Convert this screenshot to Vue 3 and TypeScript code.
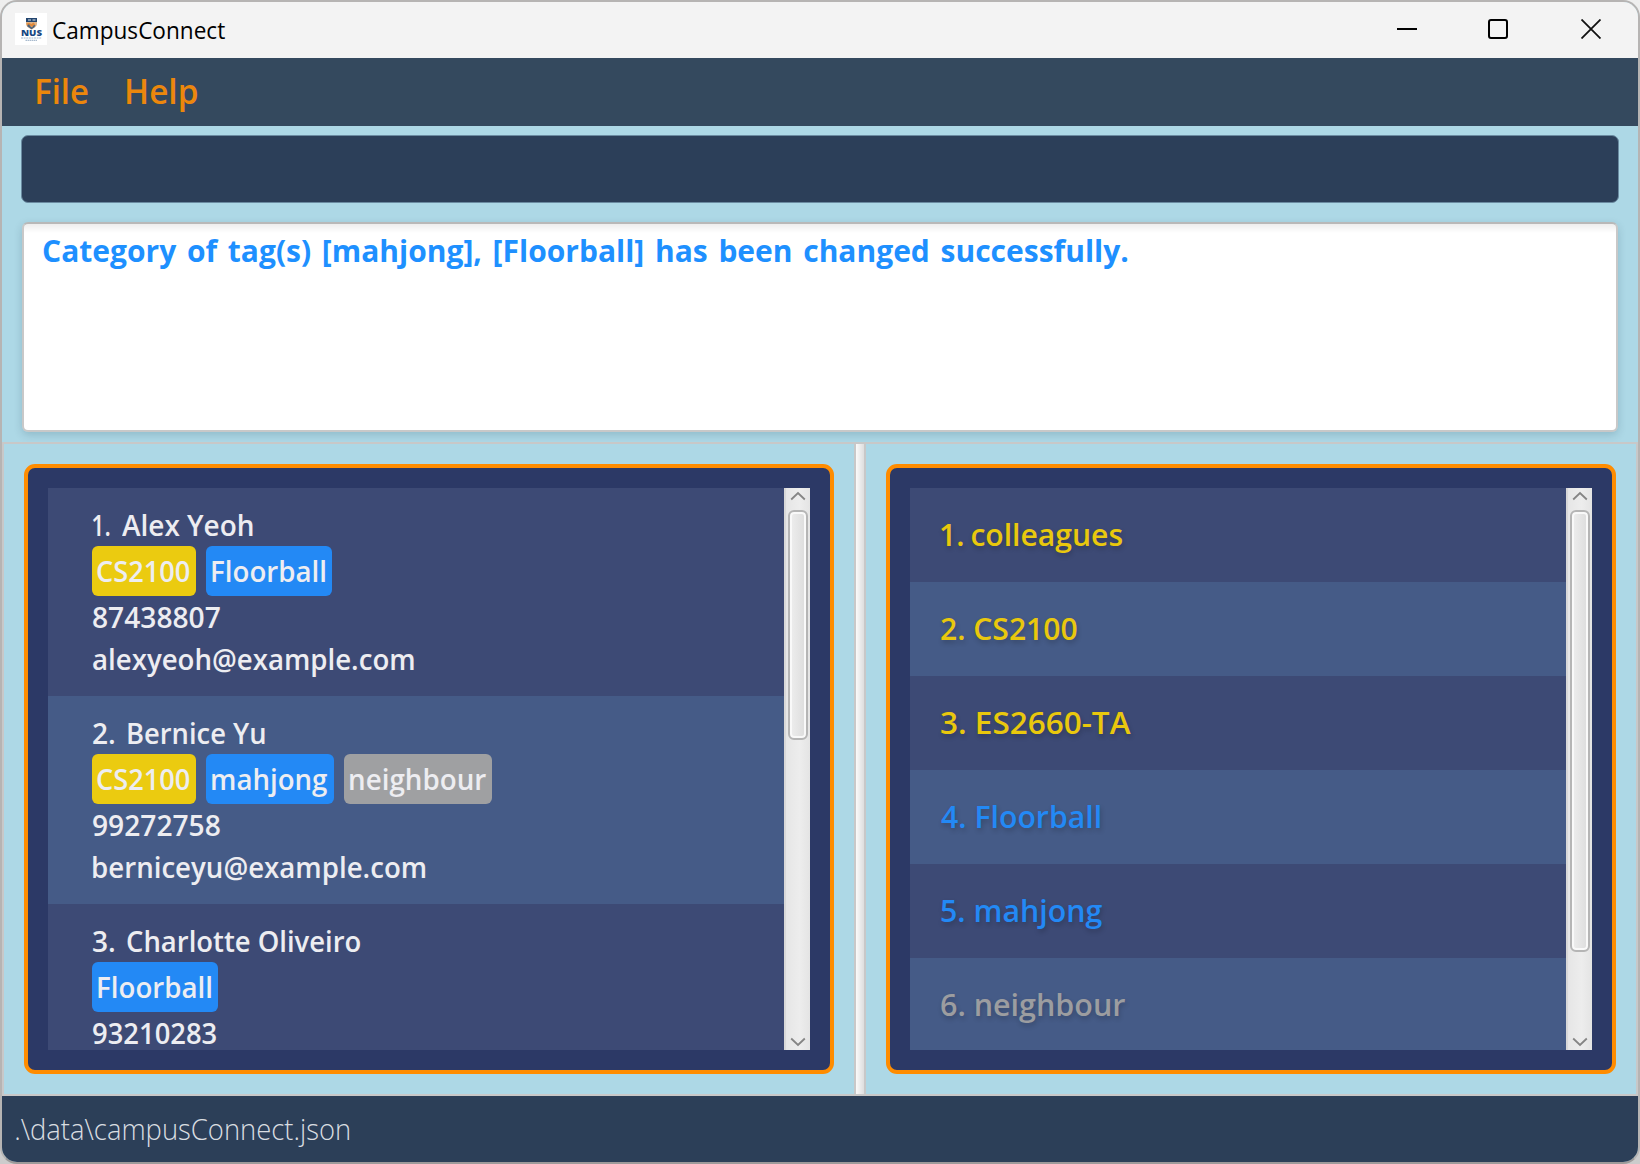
<script setup lang="ts">
type Category = 'academic' | 'activity' | 'general'

interface Fitted {
  text: string
  ink: number
}

interface Tag extends Fitted {
  category: Category
  width: number
  inset: number
}

interface Person {
  index: Fitted
  indexWidth: number
  name: Fitted
  tags: Tag[]
  phone: Fitted
  email?: Fitted
}

const cs2100: Tag = { text: 'CS2100', category: 'academic', width: 104, inset: 4.5, ink: 93 }
const floorball: Tag = { text: 'Floorball', category: 'activity', width: 126, inset: 6, ink: 113 }
const mahjong: Tag = { text: 'mahjong', category: 'activity', width: 128, inset: 6, ink: 115.5 }
const neighbour: Tag = { text: 'neighbour', category: 'general', width: 148, inset: 5.5, ink: 136 }

const people: Person[] = [
  {
    index: { text: '1.', ink: 16.5 },
    indexWidth: 29,
    name: { text: 'Alex Yeoh', ink: 130.5 },
    tags: [cs2100, floorball],
    phone: { text: '87438807', ink: 127.5 },
    email: { text: 'alexyeoh@example.com', ink: 320.5 },
  },
  {
    index: { text: '2.', ink: 21 },
    indexWidth: 35,
    name: { text: 'Bernice Yu', ink: 136.5 },
    tags: [cs2100, mahjong, neighbour],
    phone: { text: '99272758', ink: 127.5 },
    email: { text: 'berniceyu@example.com', ink: 332 },
  },
  {
    index: { text: '3.', ink: 21 },
    indexWidth: 34,
    name: { text: 'Charlotte Oliveiro', ink: 233 },
    tags: [floorball],
    phone: { text: '93210283', ink: 123 },
  },
]

const tagList: (Fitted & { category: Category; gap: number })[] = [
  { text: '1. colleagues', category: 'academic', ink: 181, gap: -2 },
  { text: '2. CS2100', category: 'academic', ink: 136, gap: 0 },
  { text: '3. ES2660-TA', category: 'academic', ink: 190, gap: 0 },
  { text: '4. Floorball', category: 'activity', ink: 159.5, gap: 0 },
  { text: '5. mahjong', category: 'activity', ink: 161, gap: 0 },
  { text: '6. neighbour', category: 'general', ink: 184, gap: 0 },
]

/* Scales a label so that its glyphs start at the box edge and span the given width. */
const vFit = {
  mounted(el: HTMLElement, binding: { value: number }) {
    const ctx = document.createElement('canvas').getContext('2d')
    if (!ctx) return
    const cs = getComputedStyle(el)
    ctx.font = `${cs.fontWeight} ${cs.fontSize} ${cs.fontFamily}`
    ctx.wordSpacing = cs.wordSpacing
    const m = ctx.measureText(el.textContent ?? '')
    const scale = binding.value / (m.actualBoundingBoxLeft + m.actualBoundingBoxRight)
    el.style.transform = `translateX(${m.actualBoundingBoxLeft * scale}px) scaleX(${scale})`
  },
}
</script>

<template>
  <div class="desktop">
    <div class="window">
      <header class="titlebar">
        <svg class="logo" width="32" height="32" viewBox="0 0 32 32">
          <rect width="32" height="32" fill="#fff" />
          <path d="M11 5h11v5.500c0 3-2.500 4.500-5.500 6-3-1.500-5.500-3-5.500-6z" fill="#dfb58a" />
          <path d="M11 5h11v4H11z" fill="#23456f" />
          <path d="M13 6.200h3v1.500h-3zM17.500 6.200h3v1.500h-3z" fill="#9fb0c2" />
          <path d="M11.300 10.500l3-.8 2 1.300 2.300-1.600 1.600 2-1.900 2.500-3.300-.8-2.200.5z" fill="#e08a3c" />
          <path d="M12 13l2-2 1 2 2 1.500 2-2.500 1.500.5-1.500 2-2.500 1.800z" fill="#47617e" />
          <text x="6" y="23" font-size="8.200" font-weight="800" textLength="21" lengthAdjust="spacingAndGlyphs" fill="#174781">NUS</text>
          <path d="M6 25h20.500" stroke="#a6b9ce" stroke-width="1.200" stroke-dasharray="2 .6" />
          <path d="M10.500 27.300h12" stroke="#a9bbce" stroke-width="1.200" stroke-dasharray="1.500 .5" />
        </svg>
        <span v-fit="172" class="fit title">CampusConnect</span>
        <div class="controls">
          <svg width="20" height="20" viewBox="0 0 20 20"><path d="M0 10h20" stroke="#000" stroke-width="2" /></svg>
          <svg width="20" height="20" viewBox="0 0 20 20"><rect x="1" y="1" width="18" height="18" rx="2" fill="none" stroke="#000" stroke-width="2" /></svg>
          <svg width="20" height="20" viewBox="0 0 20 20"><path d="M.5.5l19 19M19.500.5l-19 19" fill="none" stroke="#111" stroke-width="1.800" /></svg>
        </div>
      </header>

      <nav class="menubar">
        <div class="menu"><span v-fit="51" class="fit">File</span></div>
        <div class="menu"><span v-fit="70" class="fit">Help</span></div>
      </nav>

      <div class="command" />

      <div class="result">
        <span v-fit="1085" class="fit">Category of tag(s) [mahjong], [Floorball] has been changed successfully.</span>
      </div>

      <main class="split">
        <section class="pane left">
          <div class="panel">
            <div class="viewport">
              <ul class="list">
                <li v-for="p in people" :key="p.name.text" class="person">
                  <div class="line">
                    <span :style="{ width: p.indexWidth + 'px' }"><span v-fit="p.index.ink" class="fit">{{ p.index.text }}</span></span>
                    <span v-fit="p.name.ink" class="fit">{{ p.name.text }}</span>
                  </div>
                  <div class="tags">
                    <span
                      v-for="t in p.tags"
                      :key="t.text"
                      class="tag"
                      :class="t.category"
                      :style="{ width: t.width + 'px', paddingLeft: t.inset + 'px' }"
                    ><span v-fit="t.ink" class="fit">{{ t.text }}</span></span>
                  </div>
                  <div class="line"><span v-fit="p.phone.ink" class="fit">{{ p.phone.text }}</span></div>
                  <div v-if="p.email" class="line"><span v-fit="p.email.ink" class="fit">{{ p.email.text }}</span></div>
                </li>
              </ul>
              <div class="scrollbar">
                <svg width="16" height="22" viewBox="0 0 16 22"><path d="M1.200 11.500L8 5l6.800 6.500" /></svg>
                <div class="track"><div class="thumb people-thumb" /></div>
                <svg width="16" height="22" viewBox="0 0 16 22"><path d="M1.200 10.500L8 17l6.800-6.500" /></svg>
              </div>
            </div>
          </div>
        </section>
        <div class="divider" />
        <section class="pane right">
          <div class="panel">
            <div class="viewport">
              <ul class="list">
                <li v-for="t in tagList" :key="t.text" class="entry" :class="t.category" :style="{ wordSpacing: t.gap + 'px' }">
                  <span v-fit="t.ink" class="fit">{{ t.text }}</span>
                </li>
              </ul>
              <div class="scrollbar">
                <svg width="16" height="22" viewBox="0 0 16 22"><path d="M1.200 11.500L8 5l6.800 6.500" /></svg>
                <div class="track"><div class="thumb tags-thumb" /></div>
                <svg width="16" height="22" viewBox="0 0 16 22"><path d="M1.200 10.500L8 17l6.800-6.500" /></svg>
              </div>
            </div>
          </div>
        </section>
      </main>

      <footer class="status"><span v-fit="333" class="fit">.\data\campusConnect.json</span></footer>
    </div>
  </div>
</template>

<style>
body {
  margin: 0;
}
</style>

<style scoped>
* {
  box-sizing: border-box;
}
.desktop {
  width: 1640px;
  height: 1164px;
  background: linear-gradient(#eee, #ccc);
  font-family: "Open Sans", "Noto Sans", sans-serif;
  overflow: hidden;
}
.window {
  width: 1640px;
  height: 1164px;
  display: flex;
  flex-direction: column;
  border: 2px solid #b6b4b3;
  border-bottom-color: #9d9a9a;
  border-radius: 17px;
  overflow: hidden;
  background: #add8e6;
}
.fit {
  display: inline-block;
  white-space: nowrap;
  transform-origin: left center;
}
.titlebar {
  flex: none;
  height: 56px;
  display: flex;
  align-items: center;
  padding-left: 13px;
  padding-right: 37px;
  background: #f3f3f3;
}
.logo {
  flex: none;
  margin-top: -2px;
}
.title {
  margin-left: 6px;
  font-size: 23px;
  color: #000;
}
.controls {
  display: flex;
  gap: 72px;
  margin-left: auto;
  margin-top: -2px;
}
.controls svg:first-child {
  margin-right: -1px;
}
.controls svg:last-child {
  margin-left: 1px;
}
.menubar {
  flex: none;
  height: 68px;
  display: flex;
  padding-left: 34.5px;
  background: #34495e;
  color: #ec870c;
  font-size: 34.5px;
  font-weight: 600;
  line-height: 66px;
}
.menu:first-child {
  width: 90px;
}
.command {
  flex: none;
  height: 68px;
  margin: 9px 19px 0;
  border: 1px solid #6b8ba1;
  border-radius: 7px;
  background: #2c3f59;
}
.result {
  flex: none;
  height: 210px;
  margin: 19px 20px 0;
  padding-left: 18.5px;
  border: 2px solid #c8c8c8;
  border-top-color: #b8b8b8;
  border-radius: 6px;
  background: linear-gradient(#ededed, #fff 9px);
  box-shadow: 0 3px 8px rgba(0, 40, 60, 0.17);
  color: #1e90ff;
  font-size: 31px;
  font-weight: 700;
  line-height: 53px;
  word-spacing: 3px;
}
.split {
  flex: none;
  height: 654px;
  margin-top: 10px;
  display: flex;
  border: 2px solid #c8c8c8;
}
.pane {
  padding: 20px;
  display: flex;
  background: #add8e6;
}
.left {
  width: 850px;
}
.right {
  flex: 1;
}
.divider {
  width: 12px;
  border: solid #c8c8c8;
  border-width: 0 2px;
  background: linear-gradient(90deg, #fafafa, #dedede);
}
.panel {
  flex: 1;
  padding: 20px;
  border: 4px solid #ff8c00;
  border-radius: 11px;
  background: #2c3966;
}
.viewport {
  height: 562px;
  display: flex;
  overflow: hidden;
}
.list {
  flex: 1;
  margin: 0;
  padding: 0;
  list-style: none;
}
.list > li:nth-child(odd) {
  background: #3d4a75;
}
.list > li:nth-child(even) {
  background: #455b87;
}
.person {
  height: 208px;
  padding: 16px 44px;
  color: #ededf1;
  font-size: 28.500px;
  font-weight: 600;
}
.line {
  display: flex;
  align-items: center;
  height: 42px;
  line-height: 34px;
  padding-left: 0.5px;
}
.tags {
  display: flex;
  gap: 10px;
  height: 50px;
}
.tag {
  height: 50px;
  line-height: 50px;
  border-radius: 6px;
}
.tag.academic {
  background: #ebcb10;
}
.tag.activity {
  background: #2389f5;
}
.tag.general {
  background: #9fa0a2;
}
.entry {
  height: 94px;
  padding-left: 31px;
  font-size: 31px;
  font-weight: 600;
  line-height: 93px;
  text-shadow: 1px 3px 5px rgba(0, 0, 0, 0.2);
}
.entry.academic {
  color: #e9c80d;
}
.entry.activity {
  color: #2389f5;
}
.entry.general {
  color: #9c9da0;
}
.scrollbar {
  flex: none;
  width: 26px;
  height: 562px;
  display: flex;
  flex-direction: column;
  align-items: center;
  padding-left: 2px;
  background: linear-gradient(90deg, #d8d8d8 2px, #e6e6e6 2px, #ededed 60%, #e4e4e4);
}
.scrollbar svg {
  flex: none;
  fill: none;
  stroke: #858585;
  stroke-width: 1.800;
}
.track {
  flex: 1;
}
.thumb {
  width: 20px;
  border: 2px solid #b5b5b5;
  border-radius: 6px;
  background: linear-gradient(90deg, #eee, #dcdcdc);
  box-shadow: inset 0 0 0 2px #f9f9f9;
}
.people-thumb {
  height: 230px;
}
.tags-thumb {
  height: 442px;
}
.status {
  flex: none;
  height: 66px;
  padding-left: 14px;
  background: #2c3f58;
  color: #d9dde1;
  font-size: 29.500px;
  font-weight: 300;
  line-height: 66px;
}
</style>
